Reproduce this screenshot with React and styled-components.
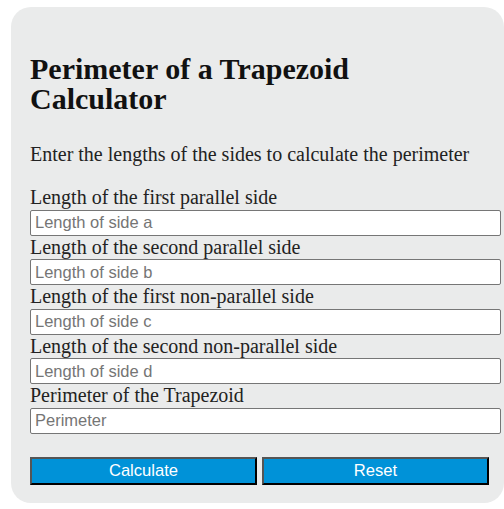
import React from 'react';
import styled, { createGlobalStyle } from 'styled-components';

const GlobalStyle = createGlobalStyle`
    body {
        margin: 0;
        background: #fff;
        font-family: "Liberation Serif", "Times New Roman", serif;
    }
`

const Page = styled.div`
    padding: 7px 0 8px 11px;
`

const Card = styled.div`
    width: 493px;
    box-sizing: border-box;
    background: #eaebeb;
    border-radius: 20px;
    padding: 47px 3px 18px 19px;
`

const Title = styled.h2`
    margin: 0;
    font-size: 30px;
    line-height: 30px;
    font-weight: bold;
    color: #111;
`

const Intro = styled.p`
    margin: 29px 0 20px;
    font-size: 20px;
    line-height: 23px;
    color: #222;
`

const Field = styled.div`
    display: flex;
    flex-direction: column;
`

const Label = styled.label`
    font-size: 20px;
    line-height: 23.5px;
    color: #222;
`

const Input = styled.input`
    box-sizing: border-box;
    width: 471px;
    height: 26px;
    margin: 0;
    padding: 0 4px;
    border: 1px solid #767676;
    border-radius: 2px;
    background: #fff;
    font-family: "Liberation Sans", Arial, sans-serif;
    font-size: 16.5px;

    &::placeholder {
        color: #757575;
    }
`

const Buttons = styled.div`
    display: flex;
    gap: 5px;
    margin-top: 23px;
`

const Button = styled.button`
    width: 227px;
    height: 28px;
    box-sizing: border-box;
    background: #0092d8;
    color: #fff;
    border-style: solid;
    border-width: 2px;
    border-color: #555 #000 #000 #555;
    font-family: "Liberation Sans", Arial, sans-serif;
    font-size: 16.6px;
    padding: 0;
`

const fields = [
    ['Length of the first parallel side', 'Length of side a'],
    ['Length of the second parallel side', 'Length of side b'],
    ['Length of the first non-parallel side', 'Length of side c'],
    ['Length of the second non-parallel side', 'Length of side d'],
    ['Perimeter of the Trapezoid', 'Perimeter'],
]

export default function App() {
    return <Page>
        <GlobalStyle />
        <Card>
            <Title>Perimeter of a Trapezoid<br />Calculator</Title>
            <Intro>Enter the lengths of the sides to calculate the perimeter</Intro>
            {fields.map(([label, placeholder]) =>
                <Field key={label}>
                    <Label>{label}</Label>
                    <Input type='text' placeholder={placeholder} />
                </Field>
            )}
            <Buttons>
                <Button>Calculate</Button>
                <Button>Reset</Button>
            </Buttons>
        </Card>
    </Page>
}
